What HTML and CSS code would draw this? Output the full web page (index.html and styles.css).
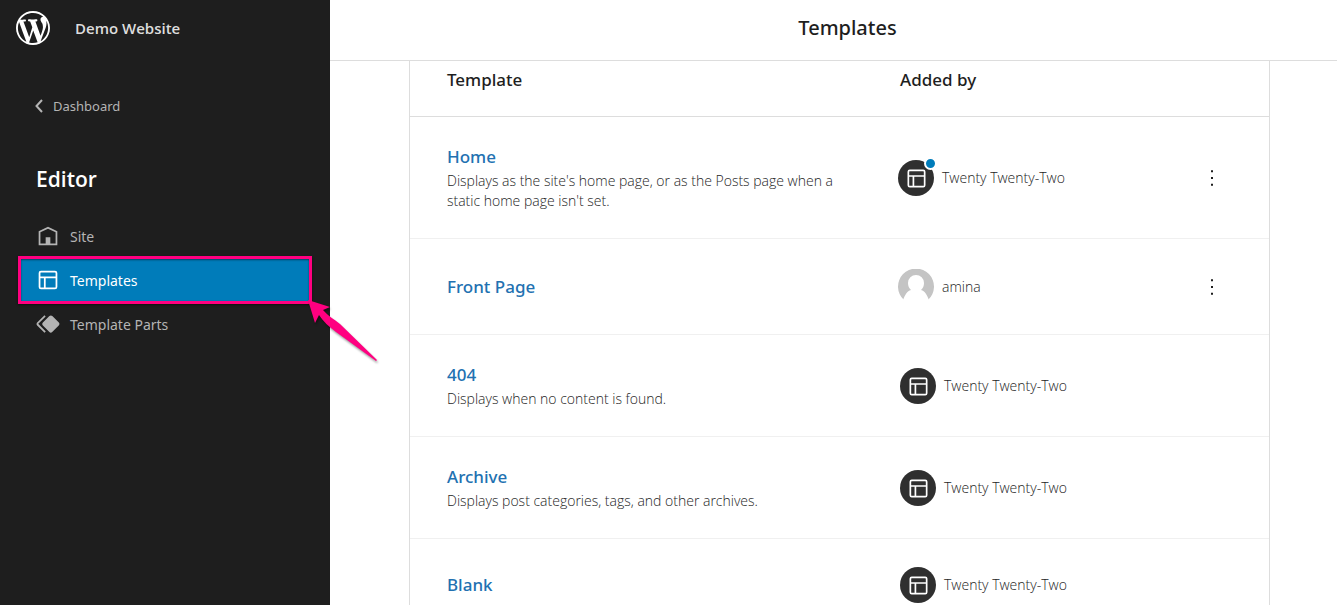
FILE: index.html
```
<!DOCTYPE html>
<html lang="en">
<head>
  <meta charset="UTF-8" />
  <meta name="viewport" content="width=device-width, initial-scale=1.0" />
  <title>Templates</title>
  <link rel="stylesheet" href="styles.css">
</head>
<body>

<!-- Shared icons -->
<svg class="sprite" aria-hidden="true">
  <symbol id="icon-layout" viewBox="0 0 24 24">
    <path d="M18 5.500H6a.5.5 0 00-.5.5v3h13V6a.5.5 0 00-.5-.5zm.5 5H10v8h8a.5.5 0 00.5-.5v-7.500zm-10 0h-3V18a.5.5 0 00.5.5h2.500v-8zM6 4h12a2 2 0 012 2v12a2 2 0 01-2 2H6a2 2 0 01-2-2V6a2 2 0 012-2z"/>
  </symbol>
  <symbol id="icon-more" viewBox="0 0 24 24">
    <path d="M11 4.200h2v2h-2zM11 11h2v2h-2zM11 17.800h2v2h-2z"/>
  </symbol>
</svg>

<div class="layout">
  <aside class="sidebar">
    <div class="site-header">
      <svg class="logo" viewBox="0 0 20 20" aria-hidden="true">
        <path d="M20 10c0-5.510-4.490-10-10-10C4.480 0 0 4.490 0 10c0 5.520 4.480 10 10 10 5.510 0 10-4.480 10-10zM7.780 15.370L4.370 6.220c.55-.02 1.170-.08 1.170-.08.5-.06.44-1.130-.06-1.110 0 0-1.450.11-2.370.11-.18 0-.37 0-.58-.01C4.120 2.690 6.870 1.110 10 1.110c2.330 0 4.450.87 6.050 2.340-.68-.11-1.650.39-1.650 1.580 0 .74.45 1.360.9 2.100.35.61.55 1.360.55 2.460 0 1.490-1.400 5-1.400 5l-3.030-8.370c.54-.02.82-.17.82-.17.5-.05.44-1.250-.06-1.220 0 0-1.440.12-2.380.12-.87 0-2.330-.12-2.330-.12-.5-.03-.56 1.200-.06 1.220l.92.08 1.260 3.410zM17.410 10c.24-.64.74-1.870.43-4.250.7 1.290 1.050 2.710 1.050 4.250 0 3.290-1.730 6.240-4.400 7.780.97-2.590 1.940-5.200 2.920-7.780zM6.100 18.090C3.120 16.650 1.110 13.530 1.110 10c0-1.300.23-2.480.72-3.590C3.250 10.300 4.670 14.200 6.100 18.090zm4.030-6.630l2.580 6.980c-.86.29-1.760.45-2.710.45-.79 0-1.570-.11-2.290-.33.81-2.380 1.620-4.740 2.420-7.100z"/>
      </svg>
      <span class="site-title">Demo Website</span>
    </div>

    <a href="#" class="back">
      <svg viewBox="0 0 8 14" aria-hidden="true"><path d="M7 1L1.500 7 7 13"/></svg>
      Dashboard
    </a>

    <h2 class="nav-title">Editor</h2>

    <nav class="nav">
      <a href="#" class="nav-item">
        <svg viewBox="0 0 24 24" aria-hidden="true"><path d="M12 4L4 7.900V20h16V7.900L12 4zm6.500 14.500H14V13h-4v5.500H5.500V8.800L12 5.700l6.500 3.100v9.700z"/></svg>
        Site
      </a>
      <a href="#" class="nav-item active">
        <svg aria-hidden="true"><use href="#icon-layout"/></svg>
        Templates
        <span class="highlight"></span>
        <svg class="arrow" viewBox="0 0 72 64" aria-hidden="true">
          <path d="M0 0L22 7 15 10 C20 16 26 19 32 24L69 60 68 61 28 32C21 27 15 21 11 15L7 23z"/>
        </svg>
      </a>
      <a href="#" class="nav-item">
        <svg viewBox="0 0 24 24" aria-hidden="true"><path d="M21.300 10.800l-5.600-5.600c-.7-.7-1.800-.7-2.500 0l-5.600 5.600c-.7.7-.7 1.800 0 2.500l5.600 5.600c.3.3.8.5 1.200.5s.9-.2 1.200-.5l5.600-5.600c.8-.7.8-1.900.1-2.500zm-17.600 1L10 5.500l-1-1-6.300 6.300c-.7.7-.7 1.800 0 2.500L9 19.500l1.100-1.100-6.300-6.300c-.2 0-.2-.2-.1-.3z"/></svg>
        Template Parts
      </a>
    </nav>
  </aside>

  <main class="main">
    <header class="page-header">
      <h1>Templates</h1>
    </header>

    <div class="content">
      <table class="list">
        <thead>
          <tr>
            <th class="col-template">Template</th>
            <th class="col-author">Added by</th>
            <th class="col-actions" aria-label="Actions"></th>
          </tr>
        </thead>
        <tbody>
          <tr>
            <td>
              <a href="#" class="name">Home</a>
              <p class="desc">Displays as the site's home page, or as the Posts page when a static home page isn't set.</p>
            </td>
            <td>
              <div class="author">
                <span class="avatar customized"><svg aria-hidden="true"><use href="#icon-layout"/></svg></span>
                Twenty Twenty-Two
              </div>
            </td>
            <td><button class="more" aria-label="Actions"><svg aria-hidden="true"><use href="#icon-more"/></svg></button></td>
          </tr>
          <tr>
            <td><a href="#" class="name">Front Page</a></td>
            <td>
              <div class="author">
                <svg class="person" viewBox="0 0 36 36" aria-hidden="true">
                  <path class="person-bg" d="M6 31A18 18 0 1 1 30 31L18 36z"/>
                  <path class="person-body" d="M18 6a8 8 0 0 1 8 8c0 3-1 5-3 7 4 1 6 5 8 10v5H5v-5c2-5 4-9 8-10-2-2-3-4-3-7a8 8 0 0 1 8-8z"/>
                </svg>
                amina
              </div>
            </td>
            <td><button class="more" aria-label="Actions"><svg aria-hidden="true"><use href="#icon-more"/></svg></button></td>
          </tr>
          <tr class="theme-row">
            <td>
              <a href="#" class="name">404</a>
              <p class="desc">Displays when no content is found.</p>
            </td>
            <td>
              <div class="author">
                <span class="avatar"><svg aria-hidden="true"><use href="#icon-layout"/></svg></span>
                Twenty Twenty-Two
              </div>
            </td>
            <td></td>
          </tr>
          <tr class="theme-row">
            <td>
              <a href="#" class="name">Archive</a>
              <p class="desc">Displays post categories, tags, and other archives.</p>
            </td>
            <td>
              <div class="author">
                <span class="avatar"><svg aria-hidden="true"><use href="#icon-layout"/></svg></span>
                Twenty Twenty-Two
              </div>
            </td>
            <td></td>
          </tr>
          <tr class="theme-row">
            <td><a href="#" class="name">Blank</a></td>
            <td>
              <div class="author">
                <span class="avatar"><svg aria-hidden="true"><use href="#icon-layout"/></svg></span>
                Twenty Twenty-Two
              </div>
            </td>
            <td></td>
          </tr>
        </tbody>
      </table>
    </div>
  </main>
</div>

</body>
</html>
```
FILE: styles.css
```
* { margin: 0; padding: 0; box-sizing: border-box; }

body {
  font-family: "Noto Sans", "Open Sans", sans-serif;
  font-size: 13px;
  color: #1e1e1e;
  background: #fff;
}

a { text-decoration: none; }

.sprite {
  display: block;
  width: 0;
  height: 0;
}

.layout {
  display: flex;
  height: 100vh;
}

/* Sidebar */
.sidebar {
  flex: 0 0 330px;
  background: #1e1e1e;
  color: #b4b4b4;
}

.site-header {
  display: flex;
  align-items: center;
  gap: 25px;
  height: 55px;
  padding-left: 16px;
}

.logo {
  width: 34px;
  height: 34px;
  fill: #fff;
}

.site-title {
  font-family: "Open Sans", sans-serif;
  font-size: 15px;
  font-weight: 600;
  line-height: 20px;
  color: #ddd;
}

.back {
  display: flex;
  align-items: center;
  gap: 10px;
  margin-top: 31px;
  padding-left: 35px;
  height: 40px;
  color: #b4b4b4;
}

.back svg {
  width: 8px;
  height: 14px;
  fill: none;
  stroke: #b4b4b4;
  stroke-width: 2;
}

.nav-title {
  margin: 38px 0 20px;
  padding-left: 36px;
  font-family: "Open Sans", sans-serif;
  font-size: 21px;
  font-weight: 600;
  line-height: 30px;
  color: #fff;
}

.nav {
  padding: 0 20px;
}

.nav-item {
  position: relative;
  display: flex;
  align-items: center;
  gap: 8px;
  height: 44px;
  padding-left: 14px;
  font-size: 14px;
  color: #b4b4b4;
}

.nav-item svg {
  width: 28px;
  height: 28px;
  fill: currentColor;
}

.nav-item.active {
  background: #007cba;
  color: #fff;
}

/* Pink marker round the active item */
.highlight {
  position: absolute;
  inset: -2px;
  border: 3px solid #ff0080;
  box-shadow: 0 1px 2px rgba(0,0,0,0.5), inset 0 1px 2px rgba(0,0,0,0.5);
}

.nav-item .arrow {
  position: absolute;
  top: 100%;
  left: 100%;
  width: 72px;
  height: 64px;
  margin: -2px 0 0 -2px;
  fill: #ff0080;
  filter: drop-shadow(1px 2px 1px rgba(0,0,0,0.4));
  z-index: 2;
}

/* Main area */
.main {
  flex: 1;
  min-width: 0;
  display: flex;
  flex-direction: column;
}

.page-header {
  display: flex;
  align-items: center;
  justify-content: center;
  flex: 0 0 61px;
  padding: 0 0 5px 28px;
  border-bottom: 1px solid #ddd;
}

.page-header h1 {
  font-size: 20px;
  font-weight: 500;
}

.content {
  flex: 1;
  min-height: 0;
  overflow: hidden;
  padding: 0 67px 0 79px;
}

.list {
  width: 100%;
  margin-top: -19px;
  border: 1px solid #ddd;
  border-spacing: 0;
  table-layout: fixed;
}

.list th {
  height: 74px;
  border-bottom: 1px solid #ddd;
  font-size: 17px;
  font-weight: 500;
  text-align: left;
}

.list td {
  padding: 28px 0 27px;
  border-bottom: 1px solid #f0f0f0;
  vertical-align: middle;
}

.list th:first-child,
.list td:first-child {
  padding-left: 37px;
  padding-right: 60px;
}

.list .col-author {
  width: 294px;
  padding-left: 2px;
}

.list .col-actions { width: 77px; }

.name {
  display: block;
  font-size: 17px;
  font-weight: 500;
  line-height: 24px;
  color: #2271b1;
}

.desc,
.author {
  font-family: "Open Sans", sans-serif;
  font-size: 14px;
  font-weight: 300;
  line-height: 20px;
  color: #1e1e1e;
}

.desc { margin-top: 2px; }

.author {
  display: flex;
  align-items: center;
  gap: 8px;
}

.theme-row .author {
  padding-left: 2px;
}

.avatar {
  position: relative;
  display: flex;
  align-items: center;
  justify-content: center;
  width: 36px;
  height: 36px;
  border-radius: 50%;
  background: #2f2f2f;
}

.avatar svg {
  width: 27px;
  height: 27px;
  fill: #fff;
}

.avatar.customized::after {
  content: "";
  position: absolute;
  top: -3px;
  right: -3px;
  width: 13px;
  height: 13px;
  border: 2px solid #fff;
  border-radius: 50%;
  box-sizing: border-box;
  background: #007cba;
}

.person {
  width: 36px;
  height: 36px;
}

.person-bg { fill: #c4c4c4; }
.person-body { fill: #fff; }

.more {
  display: flex;
  align-items: center;
  justify-content: center;
  width: 40px;
  height: 40px;
  border: none;
  background: none;
  cursor: pointer;
}

.more svg {
  width: 24px;
  height: 24px;
  fill: #1e1e1e;
}
```
